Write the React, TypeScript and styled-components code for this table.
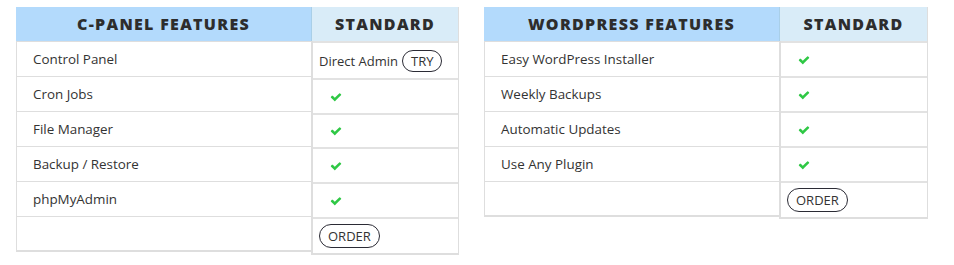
import * as React from 'react';
import styled, { createGlobalStyle } from 'styled-components';

const GlobalStyle = createGlobalStyle`
  body {
    margin: 0;
    background: #ffffff;
    font-family: "Open Sans", "Liberation Sans", sans-serif;
    color: #333;
  }
`;

const Page = styled.div`
  display: flex;
  align-items: flex-start;
  gap: 25px;
  padding: 7px 0 0 16px;
`;

const Table = styled.div`
  display: flex;
  align-items: flex-start;
`;

const Column = styled.div<{ $width: number; $main?: boolean }>`
  display: flex;
  flex-direction: column;
  width: ${(p) => p.$width}px;
  border-left: ${(p) => (p.$main ? '1px' : '2px')} solid #dedede;
  border-right: ${(p) => (p.$main ? '0' : '1px solid #dedede')};
  border-bottom: 2px solid #dedede;
`;

const HeadCell = styled.div<{ $main?: boolean }>`
  height: 34px;
  display: flex;
  align-items: center;
  justify-content: center;
  background: ${(p) => (p.$main ? '#b3dafc' : '#d9ecf8')};
  border-left: ${(p) => (p.$main ? 'none' : '1px solid #a9cfe8')};
  margin-left: ${(p) => (p.$main ? '-1px' : '-2px')};
  font-weight: 800;
  font-size: 16px;
  letter-spacing: 1.3px;
  color: #2d2d2d;
  text-transform: uppercase;
`;

const Cell = styled.div<{ $h: number }>`
  height: ${(p) => p.$h}px;
  box-sizing: border-box;
  display: flex;
  align-items: center;
  padding-left: 16px;
  font-size: 13.4px;
  color: #333;
  border-top: 1px solid #dedede;
`;

const StdCell = styled(Cell)`
  padding-left: 6px;
  font-size: 13px;
  border-top: 2px solid #e2e2e2;
`;

const CheckIcon = styled.svg`
  width: 12px;
  height: 10px;
  margin-left: 11px;
  fill: #2fc845;
`;

const Check = () => (
  <CheckIcon viewBox="0 300 1792 1200">
    <path d="M1671 566q0 40-28 68l-724 724-136 136q-28 28-68 28t-68-28l-136-136-362-362q-28-28-28-68t28-68l136-136q28-28 68-28t68 28l294 295 656-657q28-28 68-28t68 28l136 136q28 28 28 68z" />
  </CheckIcon>
);

const Pill = styled.span`
  display: inline-flex;
  align-items: center;
  height: 22px;
  padding: 0 8px;
  margin-left: 4px;
  border: 1px solid #2b2b35;
  border-radius: 12px;
  font-size: 13px;
  color: #333;
  box-sizing: border-box;
`;

const OrderPill = styled(Pill)`
  margin-left: 0;
  height: 24px;
`;

type Row = { label: string; std: React.ReactNode };

const cpanel: Row[] = [
  { label: 'Control Panel', std: <>Direct Admin<Pill>TRY</Pill></> },
  { label: 'Cron Jobs', std: <Check /> },
  { label: 'File Manager', std: <Check /> },
  { label: 'Backup / Restore', std: <Check /> },
  { label: 'phpMyAdmin', std: <Check /> },
];

const wordpress: Row[] = [
  { label: 'Easy WordPress Installer', std: <Check /> },
  { label: 'Weekly Backups', std: <Check /> },
  { label: 'Automatic Updates', std: <Check /> },
  { label: 'Use Any Plugin', std: <Check /> },
];

const FeatureTable: React.FC<{
  title: string;
  rows: Row[];
  stdHeights: number[];
  stdWidth: number;
}> = ({ title, rows, stdHeights, stdWidth }) => (
  <Table>
    <Column $width={294} $main>
      <HeadCell $main>{title}</HeadCell>
      {rows.map((r) => (
        <Cell key={r.label} $h={35}>{r.label}</Cell>
      ))}
      <Cell $h={34} />
    </Column>
    <Column $width={stdWidth}>
      <HeadCell>Standard</HeadCell>
      {rows.map((r, i) => (
        <StdCell key={r.label} $h={stdHeights[i]}>{r.std}</StdCell>
      ))}
      <StdCell $h={36}>
        <OrderPill>ORDER</OrderPill>
      </StdCell>
    </Column>
  </Table>
);

export default function App() {
  return (
    <>
      <GlobalStyle />
      <Page>
        <FeatureTable
          title="C-Panel Features"
          rows={cpanel}
          stdHeights={[37, 35, 34, 35, 35]}
          stdWidth={145}
        />
        <FeatureTable
          title="WordPress Features"
          rows={wordpress}
          stdHeights={[35, 35, 35, 35]}
          stdWidth={146}
        />
      </Page>
    </>
  );
}
